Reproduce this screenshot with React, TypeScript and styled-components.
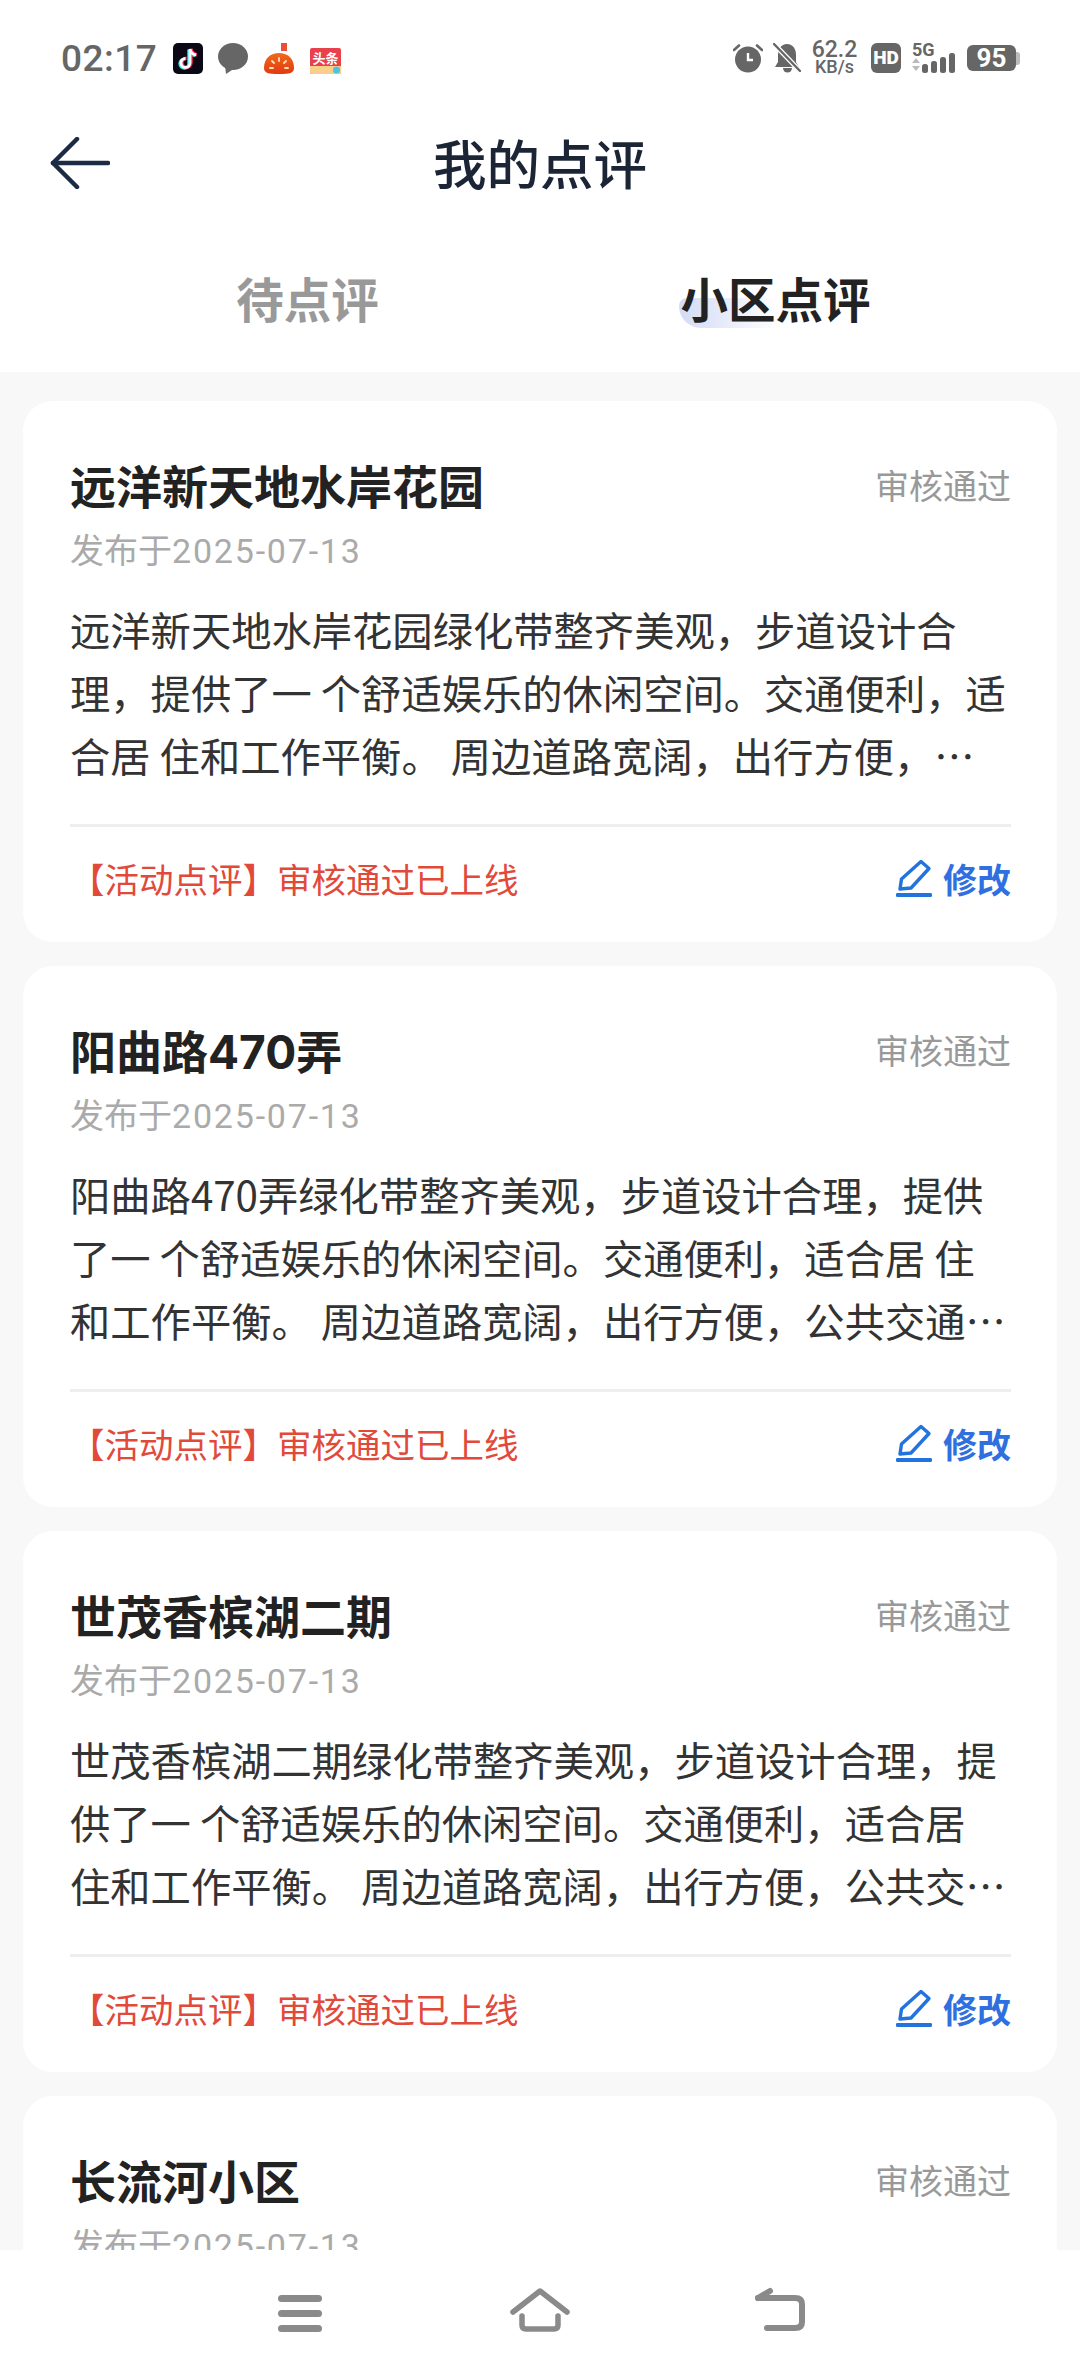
import styled, { createGlobalStyle } from 'styled-components';

const cjk = '"Noto Sans CJK SC", "Noto Sans", sans-serif';
const latin = 'Roboto, "Noto Sans CJK SC", sans-serif';

const GlobalStyle = createGlobalStyle`
  html, body {
    margin: 0;
    padding: 0;
    background: #fff;
    font-family: ${cjk};
  }
  * {
    box-sizing: border-box;
  }
`;

const Screen = styled.div`
  width: 1080px;
  height: 2376px;
  display: flex;
  flex-direction: column;
  overflow: hidden;
  background: #fff;
`;

const StatusBar = styled.div`
  height: 116px;
  flex: none;
  display: flex;
  align-items: center;
  justify-content: space-between;
  padding: 0 60px 0 61px;
`;

const StatusGroup = styled.div<{ $gap: number }>`
  display: flex;
  align-items: center;
  gap: ${(p) => p.$gap}px;
`;

const Clock = styled.span`
  font-family: ${latin};
  font-size: 37px;
  font-weight: 500;
  color: #666;
  letter-spacing: 0.5px;
  margin-right: 1px;
`;

const Speed = styled.div`
  width: 46px;
  margin-right: 3px;
  display: flex;
  flex-direction: column;
  align-items: center;
  font-family: ${latin};
  font-weight: 500;
  color: #666;
`;

const SpeedValue = styled.span`
  display: block;
  font-size: 23px;
  line-height: 18px;
`;

const SpeedUnit = styled.span`
  display: block;
  font-size: 18px;
  line-height: 16px;
`;

const Battery = styled.div`
  display: flex;
  align-items: center;
`;

const BatteryBody = styled.div`
  width: 49px;
  height: 26px;
  border-radius: 6px;
  background: #666;
  color: #fff;
  font-family: ${latin};
  font-size: 26px;
  font-weight: 700;
  line-height: 26px;
  text-align: center;
`;

const BatteryTip = styled.div`
  width: 4px;
  height: 13px;
  border-radius: 0 3px 3px 0;
  background: #bbb;
`;

const Header = styled.div`
  height: 94px;
  flex: none;
  display: grid;
  grid-template-columns: 100px 1fr 100px;
  align-items: center;
  padding: 0 30px 0 50px;
`;

const HeaderTitle = styled.h1`
  margin: 0 0 3px;
  text-align: center;
  font-size: 53.5px;
  font-weight: 500;
  color: #1b2536;
  line-height: 64px;
  transform: translateX(-10px);
`;

const Tabs = styled.div`
  height: 162px;
  flex: none;
  display: grid;
  grid-template-columns: 467px 469px;
  padding: 56px 0 0 74px;
`;

const Tab = styled.div<{ $active?: boolean }>`
  text-align: center;
  font-size: 47.5px;
  font-weight: 700;
  line-height: 64px;
  height: 64px;
  color: ${(p) => (p.$active ? '#222' : '#999')};
`;

const TabLabel = styled.span`
  position: relative;
  display: inline-block;
`;

const TabMark = styled.span`
  position: absolute;
  left: -2px;
  top: 32px;
  width: 100px;
  height: 30px;
  border-radius: 8px 0 0 22px;
  background: linear-gradient(90deg, #d3dcf5 0%, #e6ebf9 45%, #ffffff 100%);
  z-index: 0;
`;

const TabText = styled.span`
  position: relative;
  z-index: 1;
`;

const List = styled.div`
  flex: 1;
  min-height: 0;
  overflow: hidden;
  background: #f8f8f8;
  padding: 29px 23px 0;
  display: flex;
  flex-direction: column;
  gap: 24px;
`;

const Card = styled.div`
  flex: none;
  background: #fff;
  border-radius: 30px;
  padding: 54px 46px 0 47px;
`;

const TopRow = styled.div`
  display: flex;
  justify-content: space-between;
  align-items: center;
  height: 64px;
`;

const PlaceName = styled.h2`
  margin: 0;
  font-family: Inter, ${cjk};
  font-size: 46px;
  font-weight: 700;
  color: #222;
  line-height: 64px;
  height: 64px;
`;

const Status = styled.span`
  font-size: 34px;
  color: #999;
  line-height: 44px;
  transform: translateY(-2px);
`;

const DateLine = styled.div`
  margin-top: 8px;
  height: 44px;
  font-size: 34px;
  color: #aaa;
  line-height: 44px;
`;

const DateValue = styled.span`
  font-family: ${latin};
  letter-spacing: 1.8px;
`;

const Body = styled.p`
  margin: 26px 0 0;
  font-size: 40.3px;
  line-height: 63px;
  color: #333;
  display: -webkit-box;
  -webkit-box-orient: vertical;
  -webkit-line-clamp: 3;
  overflow: hidden;
`;

const Footer = styled.div`
  margin-top: 38px;
  height: 118px;
  border-top: 3px solid #eeeeee;
  display: flex;
  align-items: center;
  justify-content: space-between;
  padding-bottom: 13px;
`;

const Notice = styled.span`
  font-size: 34.5px;
  color: #e14a3b;
`;

const EditButton = styled.div`
  display: flex;
  align-items: center;
  gap: 11px;
  font-size: 34px;
  font-weight: 700;
  color: #2f6fe0;
`;

const NavBar = styled.div`
  height: 126px;
  flex: none;
  background: #fff;
  display: grid;
  grid-template-columns: 240px 240px 240px;
  justify-content: center;
  align-items: end;
  padding-bottom: 44px;
`;

const NavSlot = styled.div`
  display: flex;
  justify-content: center;
  line-height: 0;
`;

const ToutiaoSvg = styled.svg`
  margin-top: 5px;
`;

function BackArrow() {
  return (
    <svg width="60" height="52" viewBox="0 0 60 52" fill="none" stroke="#1b2a45" strokeWidth="4.5" strokeLinecap="round" strokeLinejoin="round">
      <path d="M27 2 L3 26 L27 50" />
      <path d="M3 26 H58" />
    </svg>
  );
}

function TikTok() {
  return (
    <svg width="30" height="31" viewBox="0 0 30 31">
      <rect width="30" height="31" rx="5" fill="#0b0714" />
      <path d="M17 6 V20 a4.5 4.5 0 1 1 -4.5 -4.5 M17 6 c0.5 3.5 3 5.5 6 6" fill="none" stroke="#25f4ee" strokeWidth="3.4" transform="translate(-1 0.6)" />
      <path d="M17 6 V20 a4.5 4.5 0 1 1 -4.5 -4.5 M17 6 c0.5 3.5 3 5.5 6 6" fill="none" stroke="#fe2c55" strokeWidth="3.4" transform="translate(1 -0.2)" />
      <path d="M17 6 V20 a4.5 4.5 0 1 1 -4.5 -4.5 M17 6 c0.5 3.5 3 5.5 6 6" fill="none" stroke="#fff" strokeWidth="2.8" />
    </svg>
  );
}

function Bubble() {
  return (
    <svg width="30" height="31" viewBox="0 0 30 31">
      <ellipse cx="15" cy="13.5" rx="15" ry="13.5" fill="#666" />
      <path d="M7 22 L8 31 L17 25 Z" fill="#666" />
    </svg>
  );
}

function Tomato() {
  return (
    <svg width="32" height="31" viewBox="0 0 32 31">
      <defs>
        <linearGradient id="tomato" x1="0" y1="0" x2="0" y2="1">
          <stop offset="0" stopColor="#f06a1c" />
          <stop offset="1" stopColor="#e23a10" />
        </linearGradient>
      </defs>
      <rect x="18" y="0" width="6" height="8" fill="#e8503a" />
      <path d="M1 25 C1 15 8 10 16 10 C24 10 31 15 31 25 C31 30 27 31 16 31 C5 31 1 30 1 25 Z" fill="url(#tomato)" />
      <path d="M16 15 V18 M9 18 L11 20 M23 18 L21 20 M7 25 H10 M22 25 H25" stroke="#fde3b8" strokeWidth="1.8" strokeLinecap="round" />
    </svg>
  );
}

function Toutiao() {
  return (
    <ToutiaoSvg width="31" height="26" viewBox="0 0 31 26">
      <rect width="31" height="26" rx="2" fill="#e8404c" />
      <path d="M0 18 H31 V24 a2 2 0 0 1 -2 2 H2 a2 2 0 0 1 -2 -2 Z" fill="#f8cf8c" />
      <text x="15.5" y="15" textAnchor="middle" fontSize="13" fontWeight="700" fill="#fff" fontFamily={cjk}>头条</text>
      <circle cx="26.5" cy="22" r="3.5" fill="#4fc3d8" />
    </ToutiaoSvg>
  );
}

function Alarm() {
  return (
    <svg width="30" height="30" viewBox="0 0 30 30">
      <circle cx="15" cy="16.5" r="13" fill="#666" />
      <path d="M15 10 V17 H20" fill="none" stroke="#fff" strokeWidth="2.4" />
      <path d="M1 7 L6 2.5 M29 7 L24 2.5" stroke="#666" strokeWidth="2.6" strokeLinecap="round" />
    </svg>
  );
}

function BellOff() {
  return (
    <svg width="28" height="30" viewBox="0 0 28 30">
      <path d="M14 1 C20 1 23 6 23 12 V19 L26 24 H2 L5 19 V12 C5 6 8 1 14 1 Z" fill="#666" />
      <path d="M10 25 a4.5 4.5 0 0 0 9 0 Z" fill="#666" />
      <path d="M1 1 L27 28" stroke="#fff" strokeWidth="5" />
      <path d="M1 1 L27 28" stroke="#666" strokeWidth="2.4" strokeLinecap="round" />
    </svg>
  );
}

const HdBadge = styled.div`
  width: 30px;
  height: 30px;
  border-radius: 6px;
  background: #666;
  color: #fff;
  font-family: ${latin};
  font-size: 19px;
  font-weight: 900;
  line-height: 30px;
  text-align: center;
`;

function Signal() {
  return (
    <svg width="45" height="32" viewBox="0 0 45 32">
      <text x="0" y="14" fontSize="18" fontWeight="700" fill="#666" fontFamily={latin}>5G</text>
      <path d="M0 21 L4 16 L8 21 Z M0 24 L8 24 L4 29 Z" fill="#bbb" />
      <rect x="10" y="22" width="6" height="9" rx="2.5" fill="#666" />
      <rect x="19" y="19" width="6" height="12" rx="2.5" fill="#666" />
      <rect x="28" y="15" width="6" height="16" rx="2.5" fill="#666" />
      <rect x="37" y="11" width="6" height="20" rx="2.5" fill="#666" />
    </svg>
  );
}

function Pencil() {
  return (
    <svg width="36" height="38" viewBox="0 0 36 38" fill="none" stroke="#2273de" strokeLinejoin="round" strokeLinecap="round">
      <path d="M25 2.5 L33 9.5 L15 29 L4 30 L5.5 20 Z" strokeWidth="3.4" />
      <path d="M1.5 36 H34.5" strokeWidth="3.8" />
    </svg>
  );
}

function MenuIcon() {
  return (
    <svg width="46" height="38" viewBox="0 0 46 38" fill="#8a8a8a">
      <rect x="1" y="1" width="44" height="7" rx="3.5" />
      <rect x="1" y="16" width="44" height="7" rx="3.5" />
      <rect x="1" y="31" width="44" height="7" rx="3.5" />
    </svg>
  );
}

function HomeIcon() {
  return (
    <svg width="60" height="46" viewBox="0 0 60 46" fill="none" stroke="#8a8a8a" strokeWidth="5.5" strokeLinecap="round" strokeLinejoin="round">
      <path d="M3 26 L30 5 L57 26" />
      <path d="M12 30 V39 Q12 43 16 43 H44 Q48 43 48 39 V30" />
    </svg>
  );
}

function ReturnIcon() {
  return (
    <svg width="50" height="46" viewBox="0 0 50 46" fill="none" stroke="#8a8a8a" strokeWidth="6" strokeLinecap="round" strokeLinejoin="round">
      <path d="M3 12 H40 Q47 12 47 18 V36 Q47 42 40 42 H12" />
      <path d="M3 12 L15 5" />
    </svg>
  );
}

const reviews = [
  {
    name: '远洋新天地水岸花园',
    text: '远洋新天地水岸花园绿化带整齐美观，步道设计合理，提供了一 个舒适娱乐的休闲空间。交通便利，适合居 住和工作平衡。 周边道路宽阔，出行方便，公共交通线路较多。',
  },
  {
    name: '阳曲路470弄',
    text: '阳曲路470弄绿化带整齐美观，步道设计合理，提供了一 个舒适娱乐的休闲空间。交通便利，适合居 住和工作平衡。 周边道路宽阔，出行方便，公共交通线路较多。',
  },
  {
    name: '世茂香槟湖二期',
    text: '世茂香槟湖二期绿化带整齐美观，步道设计合理，提供了一 个舒适娱乐的休闲空间。交通便利，适合居 住和工作平衡。 周边道路宽阔，出行方便，公共交通线路较多。',
  },
  {
    name: '长流河小区',
    text: '长流河小区绿化带整齐美观，步道设计合理，提供了一 个舒适娱乐的休闲空间。交通便利，适合居 住和工作平衡。 周边道路宽阔，出行方便，公共交通线路较多。',
  },
];

export default function App() {
  return (
    <Screen>
      <GlobalStyle />
      <StatusBar>
        <StatusGroup $gap={15}>
          <Clock>02:17</Clock>
          <TikTok />
          <Bubble />
          <Tomato />
          <Toutiao />
        </StatusGroup>
        <StatusGroup $gap={10.5}>
          <Alarm />
          <BellOff />
          <Speed>
            <SpeedValue>62.2</SpeedValue>
            <SpeedUnit>KB/s</SpeedUnit>
          </Speed>
          <HdBadge>HD</HdBadge>
          <Signal />
          <Battery>
            <BatteryBody>95</BatteryBody>
            <BatteryTip />
          </Battery>
        </StatusGroup>
      </StatusBar>

      <Header>
        <BackArrow />
        <HeaderTitle>我的点评</HeaderTitle>
      </Header>

      <Tabs>
        <Tab>待点评</Tab>
        <Tab $active>
          <TabLabel>
            <TabMark />
            <TabText>小区点评</TabText>
          </TabLabel>
        </Tab>
      </Tabs>

      <List>
        {reviews.map((review) => (
          <Card key={review.name}>
            <TopRow>
              <PlaceName>{review.name}</PlaceName>
              <Status>审核通过</Status>
            </TopRow>
            <DateLine>
              发布于<DateValue>2025-07-13</DateValue>
            </DateLine>
            <Body>{review.text}</Body>
            <Footer>
              <Notice>【活动点评】审核通过已上线</Notice>
              <EditButton>
                <Pencil />
                修改
              </EditButton>
            </Footer>
          </Card>
        ))}
      </List>

      <NavBar>
        <NavSlot>
          <MenuIcon />
        </NavSlot>
        <NavSlot>
          <HomeIcon />
        </NavSlot>
        <NavSlot>
          <ReturnIcon />
        </NavSlot>
      </NavBar>
    </Screen>
  );
}
